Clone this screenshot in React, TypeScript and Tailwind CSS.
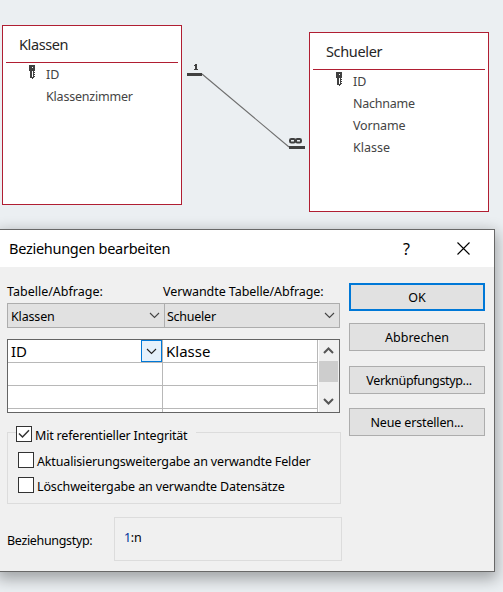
import React from "react";

const font = { ui: "font-['Noto_Sans','Liberation_Sans',sans-serif]" };

function KeyIcon({ className }: { className: string }) {
  return (
    <svg className={className} width="6" height="14" viewBox="0 0 6 14" shapeRendering="crispEdges" fill="#404040">
      <path d="M0 0h6v6H0zM1 6h2v7H1zM4 6h1v7H4zM5 7h1v1H5zM5 9h1v1H5zM5 11h1v1H5zM3 12h1v2H3z" />
      <path d="M3 2h1v1H3z" fill="#fff" />
    </svg>
  );
}

function TableNode({ title, fields, className, titleClass }: { title: string; fields: string[][]; className: string; titleClass: string }) {
  return (
    <section className={`absolute flex h-[180px] w-[180px] flex-col border border-[#b01e32] bg-white ${className}`}>
      <h2 className={`mx-[3px] flex h-[37px] items-center border-b border-[#b01e32] pl-[13px] text-[14.5px] leading-none text-[#262626] ${titleClass}`}>{title}</h2>
      <ul className="pt-px text-[12.5px] text-[#444444]">
        {fields.map(([f, spacing], i) => (
          <li key={f} className="flex h-[22px]">
            <span className="w-[43px] shrink-0 pl-[26px]">{i === 0 && <KeyIcon className="mt-px" />}</span>
            <span className={`leading-[22px] ${spacing}`}>{f}</span>
          </li>
        ))}
      </ul>
    </section>
  );
}

function Chevron({ className = "", color = "#444" }: { className?: string; color?: string }) {
  return (
    <svg className={className} width="11" height="7" viewBox="0 0 11 7" fill="none" stroke={color} strokeWidth="1.1">
      <path d="M1 1l4.5 4.5L10 1" />
    </svg>
  );
}

function Combo({ value, className, spacing }: { value: string; className: string; spacing: string }) {
  return (
    <div className={`flex h-[25px] shrink-0 items-center justify-between border border-[#adadad] bg-[#e1e1e1] ${className}`}>
      <span className={`pt-[2px] ${spacing}`}>{value}</span>
      <Chevron />
    </div>
  );
}

function Button({ children, className }: { children: React.ReactNode; className: string }) {
  return (
    <button className={`flex h-[28px] w-[136px] items-center justify-center bg-[#e1e1e1] leading-none ${className}`}>{children}</button>
  );
}

function Check({ checked, label, className, spacing }: { checked?: boolean; label: string; className: string; spacing: string }) {
  return (
    <label className={`flex h-4 items-center ${className}`}>
      <span className="flex size-4 shrink-0 items-center justify-center border border-[#333] bg-white">
        {checked && (
          <svg width="12" height="10" viewBox="0 0 12 10" fill="none" stroke="#333" strokeWidth="1.5">
            <path d="M1 4.5L4.5 8L11 1.3" />
          </svg>
        )}
      </span>
      <span className={`whitespace-nowrap pl-[3px] pt-[3px] ${spacing}`}>{label}</span>
    </label>
  );
}

export default function App() {
  return (
    <main className={`relative h-[592px] w-[503px] overflow-hidden bg-[#ebeff2] ${font.ui}`}>
      <TableNode
        className="left-[2px] top-[25px]"
        title="Klassen"
        titleClass="tracking-[-0.4px]"
        fields={[["ID", ""], ["Klassenzimmer", "tracking-[-0.2px]"]]}
      />
      <TableNode
        className="left-[309px] top-[32px]"
        title="Schueler"
        titleClass="tracking-[-0.35px]"
        fields={[["ID", ""], ["Nachname", "tracking-[-0.25px]"], ["Vorname", "tracking-[-0.15px]"], ["Klasse", ""]]}
      />
      <svg className="absolute left-[182px] top-[60px]" width="127" height="95" viewBox="182 60 127 95">
        <path d="M202 74L289 147" stroke="#6e6e6e" strokeWidth="1.1" />
        <path d="M187 73h15v3h-15zM289 146h16v3h-16z" fill="#404040" />
        <path d="M195 64h2v5h1v1h-4v-1h1v-3h-1v-1h1z" fill="#404040" shapeRendering="crispEdges" />
        <g fill="none" stroke="#404040" strokeWidth="2">
          <rect x="290" y="139" width="5" height="3.6" rx="1.3" />
          <rect x="296" y="139" width="5" height="3.6" rx="1.3" />
        </g>
      </svg>

      <div className="absolute -left-px top-[229px] flex h-[343px] w-[496px] flex-col border border-[#686868] bg-[#f0f0f0] text-[12.5px] leading-[18px] text-black shadow-[0_5px_14px_2px_rgba(0,0,0,0.32)]">
        <header className="flex h-[37px] shrink-0 items-center bg-white pl-[9px]">
          <h1 className="text-[14.5px] leading-none tracking-[-0.28px]">Beziehungen bearbeiten</h1>
          <span className="ml-auto text-[16px] leading-none">?</span>
          <svg className="ml-[47px] mr-[24px]" width="13" height="13" viewBox="0 0 13 13" stroke="#000" strokeWidth="1.1">
            <path d="M.5 .5l12 12M12.5 .5l-12 12" />
          </svg>
        </header>
        <div className="flex px-[7px]">
          <div className="flex w-[342px] flex-col">
            <div className="mt-[16px] flex h-[20px] items-start">
              <span className="w-[156px]">Tabelle/Abfrage:</span>
              <span className="whitespace-nowrap tracking-[-0.07px]">Verwandte Tabelle/Abfrage:</span>
            </div>
            <div className="flex">
              <Combo value="Klassen" className="w-[158px] pl-[3px] pr-[4px]" spacing="tracking-[-0.15px]" />
              <Combo value="Schueler" className="-ml-px w-[176px] pl-[2px] pr-[4px]" spacing="tracking-[-0.25px]" />
            </div>
            <div className="mt-[11px] flex h-[74px] w-[333px] overflow-hidden border border-[#646464] bg-white text-[15px]">
              <div className="grid w-[310px] grid-cols-[155px_155px] grid-rows-[23px_23px_23px_3px]">
                <div className="flex items-center justify-between border-r border-b border-[#b8b8b8] pl-[3px]">
                  <span>ID</span>
                  <span className="flex h-[22px] w-[21px] items-center justify-center border border-[#0078d7] bg-[#e5f1fb]">
                    <Chevron color="#222" />
                  </span>
                </div>
                <div className="flex items-center border-r border-b border-[#b8b8b8] pl-[3px]">Klasse</div>
                {[0, 1, 2, 3].map((i) => (
                  <div key={i} className="border-r border-b border-[#b8b8b8]" />
                ))}
                <div className="border-r border-[#b8b8b8]" />
                <div className="border-r border-[#b8b8b8]" />
              </div>
              <div className="ml-px flex w-[20px] flex-col items-center bg-[#f0f0f0] pr-px">
                <svg className="mt-[7px] h-[7px] shrink-0" width="11" height="7" viewBox="0 0 11 7" fill="none" stroke="#555" strokeWidth="2">
                  <path d="M1 6L5.5 1.5L10 6" />
                </svg>
                <div className="mt-[7px] h-[21px] w-[19px] shrink-0 bg-[#cdcdcd]" />
                <svg className="mt-[16px] shrink-0" width="11" height="7" viewBox="0 0 11 7" fill="none" stroke="#555" strokeWidth="2">
                  <path d="M1 1L5.5 5.5L10 1" />
                </svg>
              </div>
            </div>
            <div className="mt-[19px] h-[72px] w-[334px] border border-[#dcdcdc]">
              <div className="-mt-[7px] ml-[8px] w-[180px] bg-[#f0f0f0]">
                <Check checked label="Mit referentieller Integrität" className="" spacing="tracking-[-0.18px]" />
              </div>
              <Check label="Aktualisierungsweitergabe an verwandte Felder" className="mt-[10px] ml-[10px]" spacing="tracking-[-0.155px]" />
              <Check label="Löschweitergabe an verwandte Datensätze" className="mt-[9px] ml-[10px]" spacing="tracking-[-0.13px]" />
            </div>
            <div className="mt-[13px] flex h-[44px]">
              <span className="w-[107px] pt-[15px] tracking-[-0.33px]">Beziehungstyp:</span>
              <div className="w-[228px] border border-[#dcdcdc] pl-[9px] pt-[11px] tracking-[-0.3px]"><span className="text-[#003399]">1</span>:n</div>
            </div>
          </div>
          <div className="flex flex-col pt-[16px]">
            <Button className="border-2 border-[#0078d7] pt-[2px]">OK</Button>
            <Button className="mt-[12px] border border-[#adadad] pt-[2px]">Abbrechen</Button>
            <Button className="mt-[15px] border border-[#adadad] pl-[4px] pt-[2px] tracking-[-0.33px]">Verknüpfungstyp...</Button>
            <Button className="mt-[14px] border border-[#adadad] pt-[2px] tracking-[-0.15px]">Neue erstellen...</Button>
          </div>
        </div>
      </div>
    </main>
  );
}
